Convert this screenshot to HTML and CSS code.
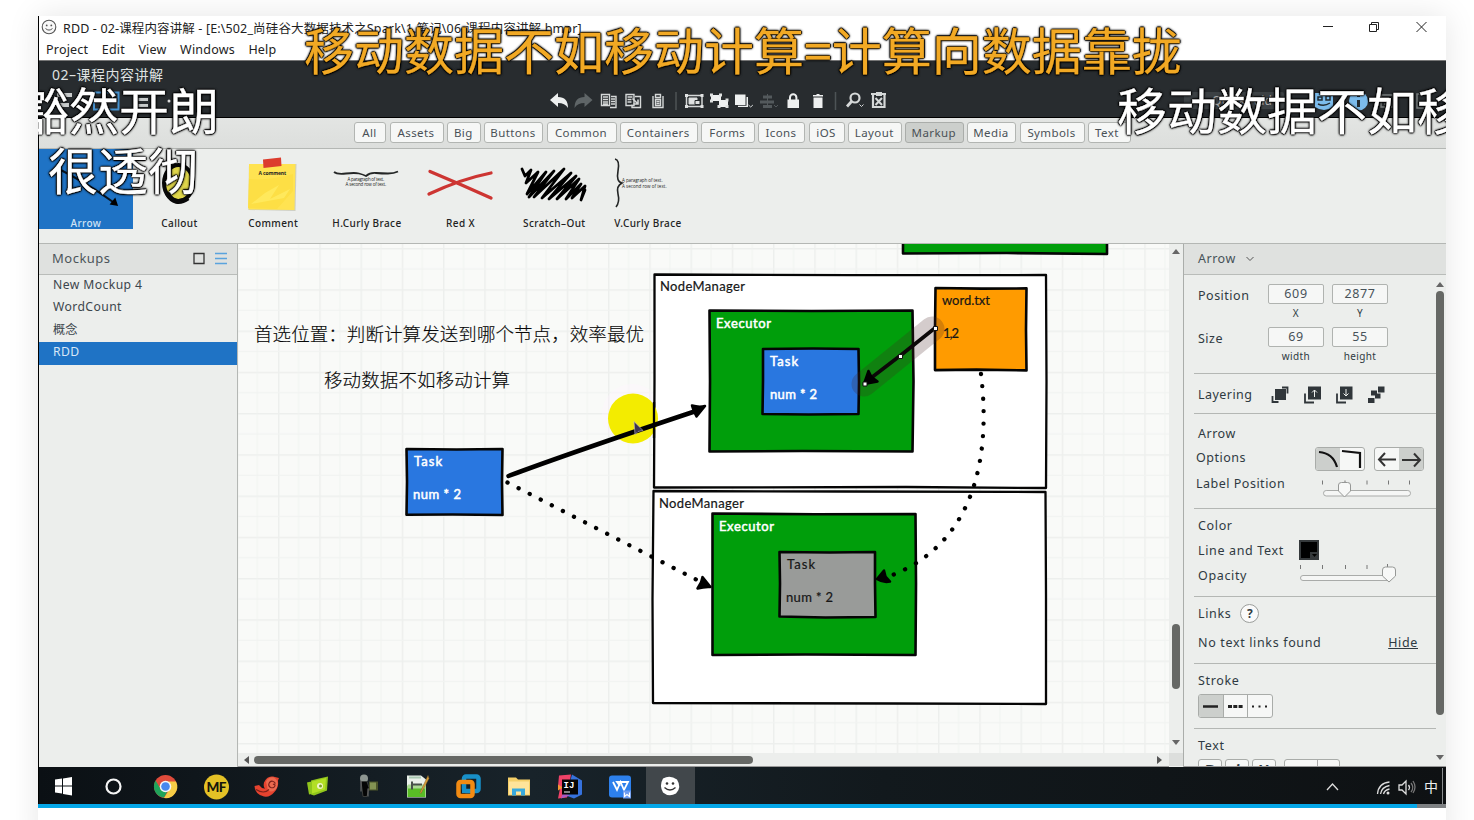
FILE: index.html
```html
<!DOCTYPE html>
<html lang="zh-CN">
<head>
<meta charset="utf-8">
<title>RDD - 02-课程内容讲解</title>
<link rel="stylesheet" href="styles.css">
</head>
<body>
<div class="player">
  <div class="desktop">
    <header class="titlebar">
      <svg class="app-icon" width="16" height="16" viewBox="0 0 16 16"><circle cx="8" cy="8" r="6.800" fill="#f8f8f8" stroke="#555" stroke-width="1.100"/><circle cx="5.700" cy="6.400" r=".9" fill="#555"/><circle cx="10.300" cy="6.400" r=".9" fill="#555"/><path d="M4.500 9.500q3.500 3.200 7 0" fill="none" stroke="#555"/></svg>
      <span class="title">RDD - 02-课程内容讲解 - [E:\502_尚硅谷大数据技术之Spark\1.笔记\06-课程内容讲解.bmpr]</span>
      <svg class="win-buttons" width="112" height="14" viewBox="1318 20 112 14" fill="none" stroke="#222"><path d="M1323 26.500h10M1369.500 24.500h7v7h-7zM1371.500 24.500v-2h7v7h-2M1416.500 22l10 10M1426.500 22l-10 10"/></svg>
    </header>
    <nav class="menu"><span>Project</span><span>Edit</span><span>View</span><span>Windows</span><span>Help</span></nav>

    <div class="toolbar">
      <div class="project-name">02–课程内容讲解</div>
      <div class="tools">
        <svg class="tools-left" width="140" height="24" viewBox="39 89 140 24"><path d="M57 93h15v4H57zM57 103h12v4H57zM138 92h10v3h-10zM138 98h10v3h-10zM138 104h10v3h-10z" fill="#c9cccc"/><path d="M94 92.500h24.500v17H94z" fill="none" stroke="#4793d1" stroke-width="2"/><circle cx="169" cy="101" r="1.500" fill="#ddd"/></svg>
        <svg class="tools-main" width="342" height="24" viewBox="547 89 342 24">
          <g fill="#eef0f0">
            <path d="M550 100l8-7v4q10 0 10 11q-3-5-10-5v4z"/>
            <path d="M592.500 100l-8-7v4q-10 0-10 11q3-5 10-5v4z" fill="#5f6567"/>
            <path d="M822.500 96.500h-9.500V95h3.500v-1h3v1h3.500v1.500zM813.500 97.500h9v10.500h-9z"/>
            <path d="M787.500 99.500h11.500v8.500h-11.500z"/><path d="M790 100v-2.500a3.200 3.200 0 0 1 6.400 0v2.500" fill="none" stroke="#eef0f0" stroke-width="2"/>
            <path d="M735 94.500h10.500v10.500H735zM746.500 97h1.500v10h-10v-1.200h8.500z"/>
            <path d="M711 95h10v6h-10zM719 100h9v7h-9z"/>
          </g>
          <g fill="none" stroke="#d5d8d8">
            <path d="M601.500 94.500h8v11h-8zM603 97h5M603 99.500h5M603 102h5M603 104h5" stroke-width="1.400"/><path d="M611 96.500h5v11h-6M611 99h4M611 101.500h4M611 104h4" stroke-width="1.400"/>
            <path d="M626 94.500h8v11h-8zM627.500 97h5M627.500 99.500h4M627.500 102h4M635 96.500h5.500v11H632v-3" stroke-width="1.400"/><path d="M632.500 98.500l5.500 5.500m0-4.500v4.500h-4.500" stroke-width="1.600"/>
            <path d="M653 96v11.500h10V96M655.500 94.500h5v3h-5zM655.500 99.500h5v6h-5zM656.500 101.500h3M656.500 103.500h3" stroke-width="1.400"/>
            <path d="M686.500 95.500h15.500v11h-15.500z" stroke-width="1.500"/><path d="M689 98h8v6h-8z" fill="#e0e2e2"/><path d="M695 100.500h5v4h-5z" fill="#e0e2e2" stroke="#282c2f"/>
            <path d="M685 94h3v3h-3zM700.500 94h3v3h-3zM685 105h3v3h-3zM700.500 105h3v3h-3z" fill="#e0e2e2" stroke="none"/>
            <path d="M710 93.500h3v3h-3zM719 93.500h3v3h-3zM710 99.500h3v3h-3zM725.500 98.500h3v3h-3zM725.500 105h3v3h-3zM717.500 105h3v3h-3z" fill="#e0e2e2" stroke="none"/>
            <path d="M748.500 105l2.200 2 2.200-2M859.500 104.500l2 2 2-2"/>
            <circle cx="855" cy="98" r="4.500" stroke-width="2.200"/><path d="M851.500 101.500l-4.500 5" stroke-width="2.800"/>
            <path d="M871 94h15M873 95v12h11.500V95" stroke-width="2.200"/><path d="M875.500 98l6.500 7M882 98l-6.500 7" stroke-width="2"/><path d="M876 94h6" stroke-width="4"/>
          </g>
          <g stroke="#53595c" stroke-width="3" fill="none"><path d="M763 97h9M760 102h14M763 106.500h9"/><path d="M767.500 94v14M774 105l2 2 2-2" stroke-width="1"/></g>
          <path d="M676 92v18M835.500 92v18" stroke="#4d5356" stroke-width="1.500"/>
        </svg>
        <svg class="tools-right" width="264" height="24" viewBox="1182 89 264 24"><rect x="1184" y="92" width="100" height="17" rx="2" fill="#3c4144"/><text x="1212" y="105" textLength="60" class="quick-add">Quick Add</text><path d="M1315 93h18v14q-9 6-18 0z" fill="#7cbcec"/><path d="M1318 97h4v3h-4zM1326 96h4v4h-4zM1318 104q6 3 12-1" stroke="#222b31" fill="none" stroke-width="1.500"/><circle cx="1358.500" cy="101" r="9.500" fill="#7cbcec"/><path d="M1358.500 95v2M1358.500 100v7" stroke="#222b31" stroke-width="3"/><path d="M1381 95h12v12h-12zM1384 98h6M1384 101h6M1384 104h6M1417 94h14v14h-14z" fill="none" stroke="#777c7e" stroke-width="1.500"/></svg>
      </div>
    </div>

    <div class="tabs">
      <span class="tab">All</span><span class="tab">Assets</span><span class="tab">Big</span><span class="tab">Buttons</span><span class="tab">Common</span><span class="tab">Containers</span><span class="tab">Forms</span><span class="tab">Icons</span><span class="tab">iOS</span><span class="tab">Layout</span><span class="tab tab-on">Markup</span><span class="tab">Media</span><span class="tab">Symbols</span><span class="tab tab-left">Text</span>
    </div>

    <div class="gallery">
      <div class="comp comp-on">
        <svg width="94" height="64" viewBox="0 0 94 64"><path d="M16 18Q48 34 74 53" stroke="#07131f" stroke-width="2" fill="none"/><path d="M78 56l-6-1 4-5z" fill="#000" stroke="#000" stroke-width="1.500"/></svg>
        <span>Arrow</span></div>
      <div class="comp">
        <svg width="94" height="64" viewBox="0 0 94 64"><ellipse cx="45.500" cy="34" rx="14.500" ry="18" fill="#dfd64b" stroke="#090909" stroke-width="4"/><path d="M34 44q8 14 21 5" stroke="#090909" stroke-width="5" fill="none"/></svg>
        <span>Callout</span></div>
      <div class="comp">
        <svg width="94" height="64" viewBox="0 0 94 64"><path d="M23 15h47.500l-1 47-47-1z" fill="#b9b9a5" opacity=".6"/><path d="M23 15h46.500l-1 46-46-.5z" fill="#ffe351"/><path d="M23 30q19 2 44-5v17L51 60l-29-1z" fill="#fddf45"/><path d="M25 55l14-11 14-8-9 14 20-10-6 9z" fill="#ffe95c"/><path d="M37 10.500l18-2 .5 8.500-18 2z" fill="#dc3c2d"/><text x="46.500" y="26" text-anchor="middle" class="mini mini-bold" textLength="28">A comment</text></svg>
        <span>Comment</span></div>
      <div class="comp">
        <svg width="94" height="64" viewBox="0 0 94 64"><path d="M14 23q3 2.500 12 1.500t13 0 7 2.500q4-3.500 10-3t12 .5 10-2" fill="none" stroke="#242626" stroke-width="1.800"/><text x="46" y="32" text-anchor="middle" class="mini" textLength="37">A paragraph of text.</text><text x="46" y="37" text-anchor="middle" class="mini" textLength="41">A second row of text.</text></svg>
        <span>H.Curly Brace</span></div>
      <div class="comp">
        <svg width="94" height="64" viewBox="0 0 94 64"><path d="M16 22.500Q46 35 77 49M15 45Q47 30 77 24" fill="none" stroke="#cd3532" stroke-width="3.300" stroke-linecap="round"/></svg>
        <span>Red X</span></div>
      <div class="comp">
        <svg width="94" height="64" viewBox="0 0 94 64"><path d="M15 20l3 7 6-6-5 13 12-11-11 22 19-22-17 25 25-26-20 26 30-28-22 29 29-25-22 26 27-23-19 23 22-20-13 20 15-15-9 14 13-12-4 14 4-10" fill="none" stroke="#000" stroke-width="2.800" stroke-linejoin="round" stroke-linecap="round"/></svg>
        <span>Scratch–Out</span></div>
      <div class="comp">
        <svg width="94" height="64" viewBox="0 0 94 64"><path d="M14 10q5 1 3 12t4 12q-6 3-4 11t-2 13" fill="none" stroke="#242626" stroke-width="1.600"/><text x="21" y="33" class="mini" textLength="41">A paragraph of text.</text><text x="21" y="38.500" class="mini" textLength="45">A second row of text.</text></svg>
        <span>V.Curly Brace</span></div>
    </div>

    <main class="work">
      <aside class="mockups">
        <div class="mockups-head"><span>Mockups</span><svg width="36" height="14" viewBox="193 250 36 14" fill="none"><path d="M194 252.500h10v10h-10z" stroke="#333" stroke-width="1.300"/><path d="M215 252.500h12M215 257.500h12M215 262.500h12" stroke="#5aa3dd" stroke-width="1.300"/></svg></div>
        <div class="mock">New Mockup 4</div><div class="mock">WordCount</div><div class="mock mock-cjk">概念</div><div class="mock mock-on">RDD</div>
      </aside>

      <section class="stage">
        <svg class="canvas" width="931" height="509" viewBox="238 244 931 509">
          <defs><pattern id="grid" x="278" y="248" width="41.250" height="41.250" patternUnits="userSpaceOnUse"><path d="M0 .5h41.250M.5 0v41.250" stroke="#edefed" stroke-width="2"/><path d="M0 21h41.250M20.600 0v41.250" stroke="#f1f3f1"/></pattern></defs>
          <rect x="238" y="244" width="931" height="509" fill="#f9faf8"/>
          <rect x="238" y="244" width="931" height="509" fill="url(#grid)"/>
          <path d="M903 240h204v14l-100-1-104 .5z" fill="#009e0b" class="ink"/>
          <circle cx="632" cy="414" r="30" fill="#fff4ff" opacity=".35"/>
          <path d="M654.500 274.500l196 .7 195.500-.2 .5 107-.5 106-140-1-252 .5.500-107z" fill="#fff" class="ink thin"/>
          <path d="M653.500 491l190 .5 202 .5.500 104v108l-152-.5-241-.5-.5-104z" fill="#fff" class="ink thin"/>
          <path d="M709.500 310.500l102 .5 101-.5 1 71-1 70-110-.5-93 .5.500-70z" fill="#009e0b" class="ink"/>
          <path d="M712.500 513.500l102 .7 101-.2.500 70-.5 71-110-.5-93 .5v-70z" fill="#009e0b" class="ink"/>
          <path d="M763 349l50-.5 45.500.500.5 33-.5 32-50 .5-46-.5.500-33z" fill="#2977e0" class="ink"/>
          <path d="M779.500 552l50 .5 45.500-.5v32l.5 33-50 .5-46-1 .5-33z" fill="#999b99" class="ink"/>
          <path d="M406.500 449l50 .5 46-.5-.5 33 .5 33-50-.5-46 .2.500-33z" fill="#2977e0" class="ink"/>
          <path d="M935.500 288l46 .6 45-.2-.5 41 .5 41-50-.8-41.500.5v-42z" fill="#ff9b00" class="ink"/>
          <circle cx="633" cy="418.500" r="25" fill="#f3ec00"/>
          <path d="M654 402v36" class="ink thin"/>
          <path d="M508.500 476Q570 453 696 411" fill="none" stroke="#000" stroke-width="4.500" stroke-linecap="round"/>
          <path d="M705 406l-8.500 10.500-2.500-5-2-6q7 2 13 .5z" class="head"/>
          <path d="M634 421.500l1 13 3-3 5-1z" fill="#3b3451" stroke="#c6bdd0" stroke-width=".6"/>
          <path d="M507.500 482.500L698 580.500" class="dots"/>
          <path d="M710.500 587l-8-10-1.500 5.500-3.500 6q7-2 13-1.500z" class="head"/>
          <path d="M981 374C989 440 984 540 890 576" class="dots"/>
          <path d="M877 579l7-8.500 1.500 6 4.500 5q-7 1.500-13-2.500z" class="head"/>
          <path d="M864 384L932 329" stroke="#442424" stroke-opacity=".23" stroke-width="25" stroke-linecap="round"/>
          <path d="M935 328Q903 354 871 378" stroke="#0c0808" stroke-width="3.600" fill="none"/>
          <path d="M864 384l4.500-13 3 6 6 4.500z" class="head"/>
          <path d="M933.500 326.500h4v4h-4zM898.500 354.500h4v4h-4zM863 382h4v4h-4z" fill="#fff" stroke="#111" stroke-width="1"/>
          <g class="note"><text x="254" y="341" textLength="390">首选位置<tspan class="mid">：</tspan>判断计算发送到哪个节点，效率最优</text><text x="324" y="387" textLength="186">移动数据不如移动计算</text></g>
          <g class="label"><text x="660" y="291" textLength="85">NodeManager</text><text x="659" y="508" textLength="85">NodeManager</text><text x="942" y="305" textLength="48">word.txt</text><text x="943" y="338" textLength="16">1,2</text><text x="787" y="569" textLength="28">Task</text><text x="786" y="602" textLength="47">num * 2</text></g>
          <g class="label light"><text x="716" y="328" textLength="55">Executor</text><text x="719" y="531" textLength="55">Executor</text><text x="770" y="366" textLength="28">Task</text><text x="770" y="399" textLength="47">num * 2</text><text x="414" y="466" textLength="28">Task</text><text x="413" y="499" textLength="48">num * 2</text></g>
        </svg>
        <div class="hscroll"><i class="tri tri-left"></i><i class="hthumb"></i><i class="tri tri-right"></i></div>
      </section>
      <div class="vscroll"><i class="tri tri-up"></i><i class="vthumb"></i><i class="tri tri-down"></i><i class="corner"></i></div>

      <aside class="inspector">
        <div class="insp-head">Arrow <svg width="8" height="6" viewBox="0 0 8 6"><path d="M.5 1L4 4.500 7.500 1" fill="none" stroke="#555"/></svg></div>
        <div class="insp-body">
          <div class="props">
            <div class="sec sec-geo">
              <span class="big">Position</span><b class="field">609</b><b class="field">2877</b>
              <span></span><small>X</small><small>Y</small>
              <span class="big">Size</span><b class="field">69</b><b class="field">55</b>
              <span></span><small>width</small><small>height</small>
            </div>
            <div class="sec sec-layer"><span class="lab">Layering</span>
              <svg width="114" height="18" viewBox="1271 386 114 18" fill="#30363a"><path d="M1275 389h11v11h-11z"/><path d="M1282 387.500h5.500v6M1272.500 396v6h6" fill="none" stroke="#30363a" stroke-width="1.800"/><path d="M1308 386.500h13v13h-13z"/><path d="M1305 393.500v9h9" fill="none" stroke="#30363a" stroke-width="1.800"/><path d="M1314.500 397v-7M1312 392.500l2.500-2.500 2.500 2.500" stroke="#eef0ee" fill="none"/><path d="M1340 386.500h12.500v13H1340z"/><path d="M1337 393.500v9h9" fill="none" stroke="#30363a" stroke-width="1.800"/><path d="M1346 389v7M1343.500 393.500l2.500 2.500 2.500-2.500" stroke="#eef0ee" fill="none"/><path d="M1378 386.500h6.500v6h-6.500zM1371 390.500h6v5h-6zM1375 393.500h5.500v5h-5.500zM1368 398h6.500v5h-6.500z"/></svg></div>
            <div class="sec sec-arrow">
              <div class="row">Arrow</div>
              <div class="row row-shift"><span>Options</span>
                <div class="seg"><span class="on"><svg width="24" height="22" viewBox="0 0 24 22"><path d="M3 4q14 1 18 15" fill="none" stroke="#111" stroke-width="2.200"/></svg></span><span><svg width="24" height="22" viewBox="0 0 24 22"><path d="M2 3l18 2v15" fill="none" stroke="#111" stroke-width="2.200"/></svg></span></div>
                <div class="seg seg-b"><span><svg width="24" height="22" viewBox="0 0 24 22"><path d="M21 11.500H4M10 5l-6 6.500 6 6.500" fill="none" stroke="#333" stroke-width="2"/></svg></span><span class="on"><svg width="24" height="22" viewBox="0 0 24 22"><path d="M3 12h18M15 5.500l6 6.500-6 6.500" fill="none" stroke="#333" stroke-width="2"/></svg></span></div></div>
              <div class="row row-shift"><span>Label Position</span><svg class="slide-a" width="92" height="22" viewBox="1321 477 92 22"><path d="M1322.500 480.500v4M1345 480.500v4M1367 480.500v4M1388.500 480.500v4M1409.500 480.500v4" stroke="#777"/><rect x="1323.500" y="490.500" width="87" height="5.500" rx="2.700" fill="#f5f6f5" stroke="#a9aba9"/><path d="M1338.500 485q0-2.500 3-2.500h6q3 0 3 2.500v6l-6 6-6-6z" fill="#f7f8f7" stroke="#969896"/></svg></div>
            </div>
            <div class="sec sec-color">
              <div class="row">Color</div>
              <div class="row"><span class="color-lab">Line and Text</span><svg class="swatch" width="20" height="20" viewBox="0 0 20 20"><path d="M0 0h20v20H0z" fill="#35393b"/><path d="M2 2h16v10h-7v6H2z" fill="#000"/><path d="M13 14h5l-2.500 3z" fill="#000"/></svg></div>
              <div class="row"><span class="color-lab">Opacity</span><svg class="slide-b" width="98" height="22" viewBox="1299 563 98 22"><path d="M1300.500 565v4M1322.500 565v4M1345.500 565v4M1367 565v4M1387.500 564v4" stroke="#777"/><rect x="1300.500" y="575.500" width="90" height="5" rx="2.500" fill="#f5f6f5" stroke="#a9aba9"/><path d="M1382.500 570q0-3 3-3h7q3 0 3 3v6l-6.500 6-6.500-6z" fill="#f7f8f7" stroke="#969896"/></svg></div>
            </div>
            <div class="sec sec-links">
              <div class="row"><span>Links</span><b class="help">?</b></div>
              <div class="row"><span>No text links found</span><u>Hide</u></div>
            </div>
            <div class="sec sec-stroke">
              <div class="row">Stroke</div>
              <div class="seg seg-3"><span class="on"><svg width="24" height="22"><path d="M4 11.500h15" stroke="#222" stroke-width="2.500"/></svg></span><span><svg width="24" height="22"><path d="M4 11.500h15" stroke="#222" stroke-width="3" stroke-dasharray="4 1.300"/></svg></span><span><svg width="24" height="22"><path d="M4 11.500h16" stroke="#222" stroke-width="2" stroke-dasharray="2 4.500"/></svg></span></div>
            </div>
            <div class="sec sec-text">
              <div class="row">Text</div>
              <div class="format"><b>B</b><b class="it">i</b><b>U</b><b class="pair"></b></div>
            </div>
          </div>
          <div class="inspscroll"><i class="tri tri-up"></i><i class="ithumb"></i><i class="tri tri-down"></i></div>
        </div>
      </aside>
    </main>

    <footer class="taskbar">
      <span class="task"><svg viewBox="0 0 50 36"><path d="M17 12l7-1v7h-7zM25 11l9-1.500V18h-9zM17 19h7v7l-7-1zM25 19h9v9l-9-1.500z" fill="#fff"/></svg></span>
      <span class="task"><svg viewBox="0 0 50 36"><circle cx="24.500" cy="19" r="7" fill="none" stroke="#f5f5f5" stroke-width="2.200"/></svg></span>
      <span class="task"><svg viewBox="0 0 50 36"><circle cx="26.500" cy="19" r="11.500" fill="#df4b3b"/><path d="M16.500 13a11.500 11.500 0 0 0 8.500 17.300l5-9.300-8 1z" fill="#20a35a"/><path d="M26.500 14h10.500a11.500 11.500 0 0 1-12 16.500l6-9.500z" fill="#f7cd46"/><circle cx="26.500" cy="19" r="5.800" fill="#f6f6f6"/><circle cx="26.500" cy="19" r="4.300" fill="#4888ed"/></svg></span>
      <span class="task"><svg viewBox="0 0 50 36"><circle cx="26.500" cy="19.500" r="12.500" fill="#e4c126"/><text x="26.500" y="24.500" text-anchor="middle" class="mf" textLength="20">MF</text></svg></span>
      <span class="task"><svg viewBox="0 0 50 36"><path d="M14.500 18.500l4.500-1q3 4 6 3.500-2-2-1-6 3-7 9-6l6 1.500-1 2.500q1 7-4 12-4 5-10 4-9-2-9.500-10.500z" fill="#e5432f"/><path d="M26 14q3-5 8-4 5 3 3 10-4 6-9 3z" fill="#ea6a50"/><path d="M35.500 16q-3-4-6-1-2 3 1 5 4 1 4.500-2 0-2-2-1M16 22q8 5 13 0" fill="none" stroke="#7c211a" stroke-width="1.200"/></svg></span>
      <span class="task"><svg viewBox="0 0 50 36"><path d="M16 15l4-1 2 12-4 1zM20 13l8-2 9-2-1 14-13 5-3-1z" fill="#90c51c"/><path d="M21 14l14-3.500-1 11.500-13 4z" fill="#b2df25"/><circle cx="29" cy="18.500" r="3" fill="#f0f5c9"/><circle cx="29.500" cy="18.500" r="1.500" fill="#799c28"/></svg></span>
      <span class="task"><svg viewBox="0 0 50 36"><circle cx="22" cy="11" r="4" fill="#8e9691"/><path d="M19 14h6l2 6-2 9h-4z" fill="#050606" stroke="#3a3d3b"/><path d="M27 14h9v9h-9z" fill="#4b542b"/><path d="M28 15h6v7h-6z" fill="#839353"/><path d="M19 13v11M26 21v8" stroke="#777"/></svg></span>
      <span class="task"><svg viewBox="0 0 50 36"><path d="M15 8h14l5 4v18H15z" fill="#eaf0ea"/><path d="M15.500 18h18v11.500h-18z" fill="#59bd26"/><path d="M16 17h17v4H16z" fill="#abd994"/><path d="M17 10h12" stroke="#a9c8b2" stroke-width="2"/><path d="M20 14v8M21 17h9" stroke="#48524a" stroke-width="2"/><path d="M36 8L28 25l1 1 8-15z" fill="#dd9d36" stroke="#78602f" stroke-width=".5"/></svg></span>
      <span class="task"><svg viewBox="0 0 50 36"><rect x="21" y="9" width="14.500" height="14.500" rx="2" fill="none" stroke="#1890c9" stroke-width="4.500"/><rect x="15.500" y="14.500" width="14" height="14" rx="2" fill="none" stroke="#f28b13" stroke-width="4.500"/><path d="M21 17v6.500h6" fill="none" stroke="#1890c9" stroke-width="4"/></svg></span>
      <span class="task"><svg viewBox="0 0 50 36"><path d="M15 10h8l2 2h12v16H15z" fill="#f5cf68"/><path d="M16 14h20v13H16z" fill="#ffe49a"/><path d="M19 28v-7h13v7h-4v-4h-5v4z" fill="#38a9dc"/></svg></span>
      <span class="task"><svg viewBox="0 0 50 36"><path d="M15 8l12-1-4 23-9 1 2-10-2-2z" fill="#ef4268"/><path d="M28 7l10 6v14l-8 4-8-3z" fill="#3672dd"/><path d="M14 17l5 3-5 3z" fill="#f49633"/><path d="M17 31l2-6 7 3z" fill="#a95ac4"/><path d="M18 12h16v15H18z" fill="#050505"/><text x="19.500" y="20.500" class="ij">IJ</text><path d="M20 24.500h6" stroke="#fff"/></svg></span>
      <span class="task"><svg viewBox="0 0 50 36"><rect x="14" y="8" width="22" height="22" rx="3" fill="#2d80ec"/><path d="M18 14.500l4 8 3.500-8 3.500 8 4-8h-11l3 4" fill="none" stroke="#fff" stroke-width="1.800"/><path d="M28 23h8v8h-8z" fill="#6d9cf0"/><path d="M29.500 25v4l2.500-2 2.500 2v-4" fill="none" stroke="#fff" stroke-width="1.200"/></svg></span>
      <span class="task task-on"><svg viewBox="0 0 50 36"><path d="M18 11q7-4 14 1 5 8-1 14-7 4-13-1-4-7 0-14z" fill="#fff"/><circle cx="22" cy="16" r="1.300" fill="#333"/><circle cx="28" cy="16" r="1.300" fill="#333"/><path d="M19.500 20q5.500 5 11 0" fill="none" stroke="#333" stroke-width="1.400"/></svg></span>
      <svg class="tray" width="124" height="37" viewBox="1322 767 124 37" fill="none" stroke="#ddd" stroke-width="1.300"><path d="M1327 790l5.500-6 5.500 6"/><path d="M1377.500 794q1-11 12-12M1380.500 794q1-7 9-8.500M1383.500 794q1-4 6-5" /><circle cx="1388" cy="793" r="1.500" fill="#ddd" stroke="none"/><path d="M1399 785h3l4-4v13l-4-4h-3zM1408.500 785q2 2.500 0 5"/><path d="M1411 783q3.500 4.500 0 9M1413 781q4 6 0 12" stroke="#777"/><text x="1424" y="792" class="ime">中</text><path d="M1442.500 768v36" stroke="#8b8e90" stroke-width="1"/></svg>
    </footer>
    <div class="progress"><i></i></div>
  </div>

  <div class="dm dm-gold">移动数据不如移动计算=计算向数据靠拢</div>
  <div class="dm dm-left">豁然开朗</div>
  <div class="dm dm-low">很透彻</div>
  <div class="dm dm-right">移动数据不如移动计算</div>
</div>
</body>
</html>
```

FILE: styles.css
```css
* { box-sizing: border-box; }
body { margin: 0; width: 1474px; height: 820px; overflow: hidden; background: #fff; padding: 16px 28px 0 38px; font-family: "Noto Sans", "Noto Sans CJK SC", sans-serif; color: #2f3a42; }
svg { display: block; flex: none; }
i { display: block; flex: none; }

.player { position: relative; width: 1408px; height: 830px; box-shadow: 0 0 30px rgba(0, 0, 0, .1); background: #fff; overflow: hidden; }
.desktop { display: flex; flex-direction: column; height: 792px; border-left: 1px solid #000; background: #eceeec; }

.titlebar { height: 24px; background: #fff; display: flex; align-items: center; padding: 0 16px 3px 2px; font-size: 12.500px; color: #222; white-space: nowrap; }
.title { margin-left: 6px; margin-top: 2px; letter-spacing: .14px; }
.win-buttons { margin-left: auto; }
.menu { height: 20px; background: #fff; display: flex; gap: 13.500px; padding-left: 7px; font-size: 12.500px; line-height: 19px; letter-spacing: .2px; color: #222; }

.toolbar { height: 58px; background: #282c2f; border-top: 1px solid #777; border-bottom: 1px solid #000; color: #dfe2e2; flex: none; }
.project-name { padding: 4px 0 0 13px; font-size: 14px; line-height: 20px; height: 28px; letter-spacing: .5px; }
.tools { display: flex; }
.tools-main { margin-left: 368px; }
.tools-right { margin-left: auto; }
.quick-add { font-size: 12px; fill: #aaa; }

.tabs { height: 31px; flex: none; background: linear-gradient(#e3e5e3, #dcdedc); border-bottom: 1px solid #b4b7b4; padding: 4px 0 0 315px; display: grid; grid-template-columns: 32px 54px 33.500px 59px 70px 77.500px 53.500px 47px 36px 53.500px 58.500px 49px 65px 43px; gap: 3.500px; }
.tab { height: 21px; border: 1px solid #b2b5b2; border-radius: 3px; background: #f6f7f6; font-size: 11.500px; line-height: 19px; letter-spacing: .4px; text-align: center; text-indent: -1px; color: #4a5156; white-space: nowrap; }
.tab-on { background: #cccfcc; border-color: #aaadaa; }
.tab-left { text-align: left; padding-left: 7px; }

.gallery { height: 95px; flex: none; display: flex; border-bottom: 1px solid #b4b7b4; background: #eceeec; }
.comp { width: 93.700px; height: 80px; display: flex; flex-direction: column; align-items: center; font-size: 10px; line-height: 20px; letter-spacing: .4px; color: #222; white-space: nowrap; font-weight: 500; }
.comp-on { background: #1f73c5; color: #cfe2f4; }
.mini { font: 4.500px "Open Sans", sans-serif; fill: #222; }
.mini-bold { font-weight: 700; font-size: 5px; }

.work { height: 523px; flex: none; display: flex; }
.mockups { width: 199px; border-right: 1px solid #b4b7b4; }
.mockups-head { height: 31px; border-bottom: 1px solid #b9bcb9; background: #dfe1df; display: flex; align-items: center; justify-content: space-between; padding: 0 8px 3px 13px; font-size: 13px; letter-spacing: .5px; color: #4c555a; }
.mock { height: 22.400px; line-height: 20px; padding-left: 14px; font-size: 12.200px; letter-spacing: .4px; color: #3c464c; }
.mock-cjk { letter-spacing: 0; }
.mock-on { background: #1f73c5; color: #d8e8f7; }

.stage { width: 931px; background: #eceeec; }
.ink { stroke: #050505; stroke-width: 2.600px; stroke-linejoin: round; }
.thin { stroke-width: 2.300px; }
.head { fill: #000; stroke: #000; stroke-width: 2.500px; stroke-linejoin: round; }
.dots { fill: none; stroke: #000; stroke-width: 4.300px; stroke-linecap: round; stroke-dasharray: .1 12.350; }
.note { font: 300 18.500px "Noto Sans CJK SC", sans-serif; fill: #080808; stroke: #080808; stroke-width: .15px; }
.mid { font-family: "Noto Sans CJK TC", sans-serif; }
.label { font: 400 13px Lato, "Open Sans", sans-serif; fill: #161616; stroke: #161616; stroke-width: .2px; }
.light { fill: #fff; stroke: #fff; stroke-width: .5px; }
.hscroll { height: 14px; display: flex; align-items: center; padding: 0 6px; border-bottom: 1px solid #999; }
.hthumb { width: 499px; height: 8px; border-radius: 4px; background: #666865; margin-left: 5px; }
.tri { border: 4px solid transparent; width: 0; height: 0; }
.tri-left { border-right: 5px solid #555; border-left: 0; }
.tri-right { border-left: 5px solid #555; border-right: 0; margin-left: auto; margin-right: 1px; }
.tri-up { border-bottom: 5px solid #666; border-top: 0; }
.tri-down { border-top: 5px solid #666; border-bottom: 0; }
.vscroll { width: 15px; border-right: 1px solid #aaadaa; display: flex; flex-direction: column; align-items: center; padding-top: 5px; background: #eceeec; }
.vthumb { width: 8px; height: 65px; margin-top: 370px; border-radius: 4px; background: #666865; }
.vscroll .tri-down { margin-top: 51px; margin-bottom: 8px; }
.corner { width: 14px; height: 13px; background: #dcdedc; }

.inspector { flex: 1; display: flex; flex-direction: column; }
.insp-head { height: 31px; flex: none; background: #dfe1df; border-bottom: 1px solid #b9bcb9; display: flex; align-items: center; gap: 10px; padding-left: 14px; padding-bottom: 1px; font-size: 12.500px; letter-spacing: .5px; color: #465158; }
.insp-body { display: flex; height: 492px; overflow: hidden; border-bottom: 1px solid #999; }
.props { width: 250px; padding-left: 10px; font-size: 12.500px; letter-spacing: .65px; }
.sec { border-bottom: 1px solid #b4b7b4; width: 242px; padding-left: 4px; }
.sec-geo { height: 99px; padding-top: 9px; display: grid; grid-template-columns: 62px 56px 56px; grid-template-rows: 20px 23px 20px 18px; column-gap: 8px; }
.big { line-height: 24px; letter-spacing: .5px; }
.field { height: 20px; border: 1px solid #b0b3b0; border-radius: 2px; background: #f6f7f6; font-weight: 400; text-align: center; line-height: 18px; color: #48535a; font-size: 12.500px; }
small { text-align: center; font-size: 10px; line-height: 18px; letter-spacing: .4px; }
.sec-layer { height: 40px; display: flex; align-items: center; padding-top: 2px; letter-spacing: .45px; }
.lab { width: 73px; }
.row { display: flex; align-items: center; height: 24px; position: relative; white-space: nowrap; }
.row-shift { margin-left: -2px; }
.sec-arrow { height: 95px; padding-top: 7px; letter-spacing: .5px; }
.sec-arrow .row:last-child { height: 28px; }
.sec-arrow .row-shift > span { width: 119px; }
.seg { display: flex; height: 24px; width: 50px; flex: none; border: 1px solid #a9aca9; border-radius: 3px; background: #f6f7f6; overflow: hidden; margin-top: 4px; }
.seg span { flex: 1; overflow: hidden; }
.seg .on { background: #cccfcc; }
.seg-b { margin-left: 9px; }
.slide-a { margin-left: 6px; margin-top: 10px; }
.sec-color { height: 88px; padding-top: 4px; }
.sec-color .row { height: 25px; }
.color-lab { width: 101px; }
.swatch { margin-top: -2px; }
.slide-b { margin-top: -4px; }
.sec-links { height: 67px; padding-top: 4px; }
.sec-links .row + .row { justify-content: space-between; padding-right: 18px; height: 34px; }
.help { width: 19px; height: 19px; border: 1px solid #9b9e9b; border-radius: 50%; background: #fafafa; margin-left: 9px; text-align: center; line-height: 17px; font-size: 12px; letter-spacing: 0; }
.sec-stroke { height: 65px; padding-top: 4px; }
.seg-3 { width: 75px; margin-top: 2px; }
.seg-3 span + span { border-left: 1px solid #a9aca9; }
.sec-text { border: 0; padding-top: 4px; }
.format { display: flex; gap: 3px; margin-top: 2px; }
.format b { width: 24px; height: 24px; border: 1px solid #a9aca9; border-radius: 3px; background: #f6f7f6; text-align: center; font-size: 15px; line-height: 18px; letter-spacing: 0; }
.format .it { font-style: italic; }
.format .pair { width: 56px; margin-left: 5px; background: linear-gradient(90deg, #f6f7f6 32px, #aaa 32px, #aaa 33px, #f6f7f6 33px); }
.inspscroll { width: 12px; display: flex; flex-direction: column; align-items: center; padding-top: 7px; }
.ithumb { width: 8px; height: 424px; margin-top: 4px; border-radius: 4px; background: #666865; }
.inspscroll .tri-down { margin-top: 40px; }

.taskbar { height: 37px; flex: none; display: flex; background: linear-gradient(90deg, #0b1014, #18232a 35%, #12191d 60%, #0e1113); }
.task { width: 50.600px; flex: none; }
.task svg { width: 50px; height: 37px; margin-left: -1px; }
.task-on { width: 49px; background: #41474b; }
.tray { margin-left: auto; }
.mf { font: 900 13.500px Lato, sans-serif; fill: #17150c; }
.ij { font: 700 9px "Liberation Mono", monospace; fill: #fff; }
.ime { font: 14px "Noto Sans CJK SC", sans-serif; fill: #eee; stroke: none; }
.progress { height: 4px; background: #7d8082; margin-left: -1px; }
.progress i { width: 1379px; height: 4px; background: #05a7e8; }

/* Floating comments drawn over the video */
.dm { position: absolute; font: 400 50px/50px "Noto Sans CJK SC", sans-serif; white-space: nowrap; color: #fff; text-shadow: 1px 0 1px #000, -1px 0 1px #000, 0 1px 1px #000, 0 -1px 1px #000, 0 0 3px #000, 0 0 3px #000; -webkit-text-stroke: .3px currentColor; }
.dm-gold { left: 266px; top: 7px; color: #f2a924; }
.dm-left { left: -19px; top: 67px; }
.dm-low { left: 10px; top: 127px; }
.dm-right { left: 1079px; top: 67px; }
```
